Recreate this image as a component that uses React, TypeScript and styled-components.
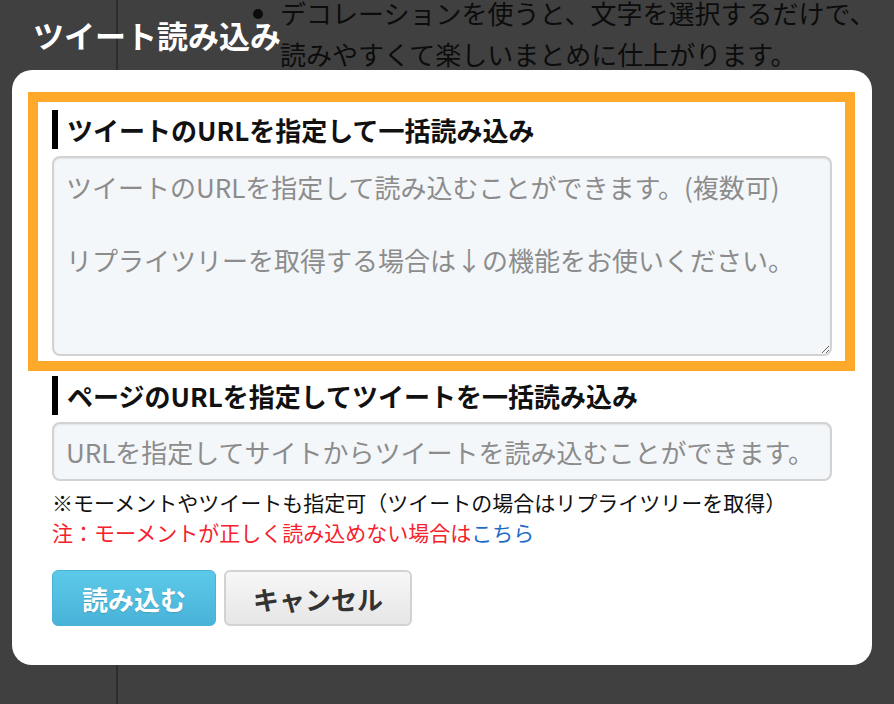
import React from "react";
import styled, { createGlobalStyle } from "styled-components";

const GlobalStyle = createGlobalStyle`
  html, body {
    margin: 0;
    padding: 0;
    height: 100%;
    background: #404040;
  }
  body {
    font-family: "Noto Sans CJK JP", "Noto Sans", sans-serif;
    overflow: hidden;
  }
  #root {
    height: 100%;
  }
`;

const Page = styled.div`
  position: relative;
  width: 100%;
  height: 100vh;
  background: #404040;
  overflow: hidden;
  display: flex;
`;

const SideColumn = styled.div`
  width: 116px;
  flex: none;
  border-right: 2px solid #2d2d2d;
`;

const Article = styled.div`
  flex: 1;
  padding-left: 162px;
`;

const BulletList = styled.ul`
  margin: -8px 0 0;
  padding: 0;
  width: 605px;
  color: #0c0c0c;
  font-size: 26px;
  line-height: 41px;
  list-style: disc;
`;

const Overlay = styled.div`
  position: absolute;
  inset: 0;
  display: flex;
  flex-direction: column;
  padding: 15px 0 0 12px;
`;

const ModalTitle = styled.h2`
  margin: 0 0 15px;
  padding-left: 21px;
  color: #fff;
  font-size: 31px;
  font-weight: 700;
  line-height: 40px;
`;

const Card = styled.div`
  width: 860px;
  box-sizing: border-box;
  background: #fff;
  border-radius: 20px;
  padding: 22px 40px 39px;
`;

const Highlight = styled.div`
  margin: 0 -23px 0 -24px;
  border: 10px solid #ffa92b;
  padding: 8px 13px 5px 14px;
`;

const SectionHeading = styled.h3<{ $spaced?: boolean }>`
  margin: ${(p) => (p.$spaced ? "5px" : "0")} 0 7px;
  border-left: 6px solid #000;
  padding-left: 9px;
  font-size: 26px;
  font-weight: 700;
  line-height: 39px;
  color: #111;
`;

const fieldBase = `
  display: block;
  width: 100%;
  box-sizing: border-box;
  margin: 0;
  border: 2px solid #d2d2d2;
  border-radius: 8px;
  background: #f4f7fa;
  font-family: "Noto Sans CJK JP", "Noto Sans", sans-serif;
  font-size: 26px;
  color: #333;
  box-shadow: inset 0 1px 2px rgba(0, 0, 0, 0.08);
  outline: none;
`;

const UrlTextArea = styled.textarea`
  ${fieldBase}
  height: 200px;
  padding: 11px 12px;
  line-height: 36.5px;
  resize: vertical;
  &::placeholder {
    color: #8c8c8c;
  }
`;

const UrlInput = styled.input`
  ${fieldBase}
  height: 59px;
  padding: 0 12px;
  &::placeholder {
    color: #8c8c8c;
  }
`;

const Note = styled.p<{ $first?: boolean }>`
  margin: ${(p) => (p.$first ? "6px" : "0")} 0 0;
  font-size: 21px;
  line-height: 30px;
  color: #111;
`;

const Warn = styled.span`
  color: #f5222d;
`;

const Link = styled.a`
  color: #1e6cc8;
  text-decoration: none;
`;

const ButtonRow = styled.div`
  display: flex;
  gap: 8px;
  margin-top: 23px;
`;

const PrimaryButton = styled.button`
  height: 56px;
  padding: 0 29px;
  border: 1px solid #4ab2d6;
  border-radius: 6px;
  background: linear-gradient(#5dc9e9, #48b3d8);
  color: #fff;
  font-family: "Noto Sans CJK JP", "Noto Sans", sans-serif;
  font-size: 26px;
  font-weight: 700;
  text-shadow: 0 1px 1px rgba(0, 0, 0, 0.15);
  cursor: pointer;
`;

const CancelButton = styled.button`
  height: 56px;
  padding: 0 27px;
  border: 2px solid #d2d2d2;
  border-radius: 6px;
  background: linear-gradient(#f7f7f7, #e6e6e6);
  color: #333;
  font-family: "Noto Sans CJK JP", "Noto Sans", sans-serif;
  font-size: 26px;
  font-weight: 700;
  cursor: pointer;
`;

export default function App() {
  return (
    <>
      <GlobalStyle />
      <Page>
        <SideColumn />
        <Article>
          <BulletList>
            <li>デコレーションを使うと、文字を選択するだけで、読みやすくて楽しいまとめに仕上がります。</li>
          </BulletList>
        </Article>
        <Overlay>
          <ModalTitle>ツイート読み込み</ModalTitle>
          <Card>
            <Highlight>
              <SectionHeading>ツイートのURLを指定して一括読み込み</SectionHeading>
              <UrlTextArea
                placeholder={
                  "ツイートのURLを指定して読み込むことができます。(複数可)\n\nリプライツリーを取得する場合は↓の機能をお使いください。"
                }
              />
            </Highlight>
            <SectionHeading $spaced>ページのURLを指定してツイートを一括読み込み</SectionHeading>
            <UrlInput placeholder="URLを指定してサイトからツイートを読み込むことができます。" />
            <Note $first>※モーメントやツイートも指定可（ツイートの場合はリプライツリーを取得）</Note>
            <Note>
              <Warn>注：モーメントが正しく読み込めない場合は</Warn>
              <Link href="#">こちら</Link>
            </Note>
            <ButtonRow>
              <PrimaryButton>読み込む</PrimaryButton>
              <CancelButton>キャンセル</CancelButton>
            </ButtonRow>
          </Card>
        </Overlay>
      </Page>
    </>
  );
}
